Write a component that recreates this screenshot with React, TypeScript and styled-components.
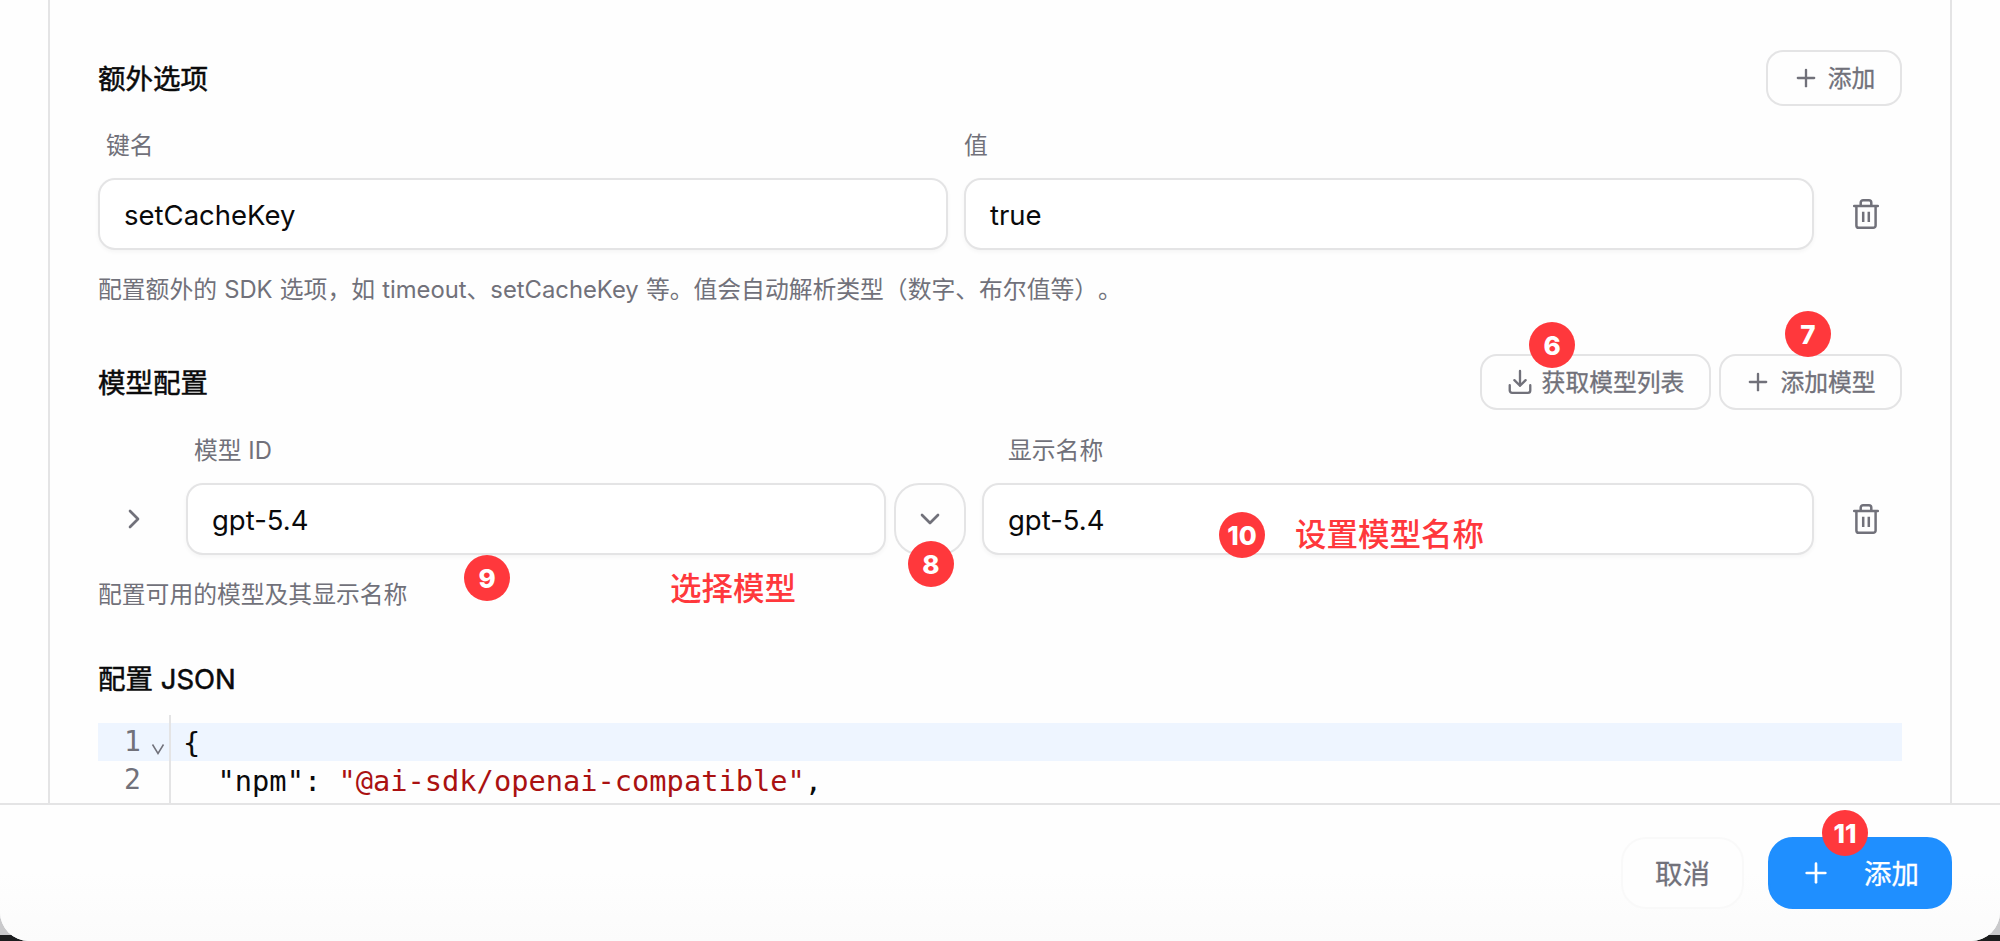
import React from "react";
import styled, { createGlobalStyle } from "styled-components";
import { Plus, ChevronRight, ChevronDown } from "lucide-react";

const SANS = `Inter, "Noto Sans CJK SC", sans-serif`;
const MONO = `"DejaVu Sans Mono", "Liberation Mono", monospace`;
const BORDER = "#e4e4e5";
const MUTED = "#71717a";
const INK = "#0a0a0b";
const RED = "#ff383c";

const GlobalStyle = createGlobalStyle`
  *, *::before, *::after { box-sizing: border-box; }
  html, body { margin: 0; padding: 0; overflow: hidden; }
  body { font-family: ${SANS}; color: ${INK}; }
  button { font-family: inherit; margin: 0; }
`;

const Backdrop = styled.div`
  position: relative;
  width: 2000px;
  height: 941px;
  overflow: hidden;
  background: linear-gradient(#c9c9cb 935px, #1c1d1e 935px);
`;

const Dialog = styled.div`
  display: flex;
  flex-direction: column;
  height: 941px;
  border-radius: 0 0 29px 29px;
  overflow: hidden;
  background: #fefefe;
`;

const Body = styled.div`
  height: 803px;
  padding: 0 48px;
  overflow: hidden;
`;

const Panel = styled.div`
  height: 100%;
  padding: 50px 48px 0;
  border-left: 2px solid ${BORDER};
  border-right: 2px solid ${BORDER};
`;

const Section = styled.section<{ $height: number }>`
  height: ${(p) => p.$height}px;
`;

const Title = styled.h3`
  margin: 0;
  font-size: 27.5px;
  font-weight: 400;
  line-height: 41px;
  white-space: nowrap;
  -webkit-text-stroke: 0.5px currentColor;
`;

const SectionHead = styled.div`
  display: flex;
  align-items: center;
  justify-content: space-between;
  height: 56px;

  ${Title} {
    padding-top: 2px;
  }
`;

const Actions = styled.div`
  display: flex;
  gap: 8px;
`;

const SmallButton = styled.button<{ $width: number }>`
  display: flex;
  align-items: center;
  justify-content: center;
  gap: 8px;
  width: ${(p) => p.$width}px;
  height: 56px;
  padding: 0 1px 0 0;
  border: 2px solid ${BORDER};
  border-radius: 17px;
  background: #fefefe;
  color: ${MUTED};
  font-size: 23.8px;
  white-space: nowrap;
`;

const ButtonText = styled.span`
  margin-top: -3px;
  -webkit-text-stroke: 0.3px currentColor;
`;

const Labels = styled.div<{ $indent: number; $top?: number }>`
  display: flex;
  align-items: center;
  height: 32px;
  margin: ${(p) => p.$top ?? 24}px 0 16px;
  padding-left: ${(p) => p.$indent}px;
`;

const Label = styled.span<{ $width?: number }>`
  width: ${(p) => (p.$width ? `${p.$width}px` : "auto")};
  color: ${MUTED};
  font-size: 23.8px;
  line-height: 32px;
`;

const FieldRow = styled.div`
  display: flex;
  align-items: center;
  height: 72px;
`;

const Input = styled.div<{ $width: number; $gap?: number }>`
  display: flex;
  align-items: center;
  width: ${(p) => p.$width}px;
  height: 72px;
  margin-right: ${(p) => p.$gap ?? 16}px;
  padding: 2px 24px 0;
  border: 2px solid ${BORDER};
  border-radius: 17px;
  background: #fff;
  box-shadow: 0 2px 4px rgba(0, 0, 0, 0.04);
  font-size: 27.5px;
`;

const IconButton = styled.button<{ $gap?: number; $outlined?: boolean }>`
  display: flex;
  align-items: center;
  justify-content: center;
  width: 72px;
  height: 72px;
  margin-right: ${(p) => p.$gap ?? 0}px;
  padding: 0;
  border: 2px solid ${(p) => (p.$outlined ? BORDER : "transparent")};
  border-radius: 25px;
  background: transparent;
  color: ${MUTED};
`;

const Hint = styled.p`
  margin: 24px 0 0;
  color: ${MUTED};
  font-size: 23.8px;
  line-height: 32px;
  word-spacing: 0.5px;
  text-spacing-trim: space-all;
  white-space: nowrap;
`;

const Editor = styled.div`
  display: flex;
  height: 88px;
  margin-top: 15px;
  background: linear-gradient(transparent 8px, #eef5ff 8px, #eef5ff 46px, transparent 46px);
  font-family: ${MONO};
  font-size: 28.7px;
`;

const Gutter = styled.div`
  width: 73px;
  padding-top: 8px;
  border-right: 2px solid ${BORDER};
  color: ${MUTED};
  font-size: 28px;
`;

const GutterRow = styled.div`
  display: flex;
  align-items: center;
  height: 38px;
  padding-left: 26px;
  line-height: 36px;
`;

const FoldMark = styled.svg`
  margin: 14px 0 0 10px;
`;

const Code = styled.div`
  padding: 9px 0 0 12px;
`;

const CodeLine = styled.div`
  height: 38px;
  line-height: 38px;
  white-space: pre;
`;

const StringToken = styled.span`
  color: #aa1111;
`;

const Footer = styled.footer`
  display: flex;
  justify-content: flex-end;
  gap: 24px;
  height: 138px;
  padding: 32px 48px 0 0;
  border-top: 2px solid ${BORDER};
  background: linear-gradient(#fefefe 50%, #fbfbfb);
`;

const FooterButton = styled.button<{ $primary?: boolean }>`
  display: flex;
  align-items: center;
  justify-content: center;
  gap: 32px;
  width: ${(p) => (p.$primary ? 184 : 123)}px;
  height: 72px;
  padding: ${(p) => (p.$primary ? "0 1px 0 0" : "0")};
  border: 2px solid ${(p) => (p.$primary ? "#1f8fff" : "#f9f9f9")};
  border-radius: 25px;
  background: ${(p) => (p.$primary ? "#1f8fff" : "#fefefe")};
  color: ${(p) => (p.$primary ? "#fff" : MUTED)};
  font-size: 27.5px;
  white-space: nowrap;
`;

const Badge = styled.span<{ $x: number; $y: number }>`
  position: absolute;
  left: ${(p) => p.$x - 23}px;
  top: ${(p) => p.$y - 23}px;
  width: 46px;
  height: 46px;
  border-radius: 50%;
  background: ${RED};
  color: #fff;
  font-size: 26px;
  font-weight: 800;
  line-height: 47px;
  text-align: center;
`;

const Note = styled.span<{ $x: number; $y: number }>`
  position: absolute;
  left: ${(p) => p.$x}px;
  top: ${(p) => p.$y - 20}px;
  color: ${RED};
  font-size: 31.5px;
  font-weight: 500;
  line-height: 40px;
  white-space: nowrap;
`;

const TrashIcon = () => (
  <svg width="32" height="32" viewBox="0 0 32 32" fill="none" stroke="currentColor" strokeWidth="2.5" strokeLinecap="round" strokeLinejoin="round">
    <path d="M4.2 8H27.8M6.4 8V27.4a2.4 2.4 0 0 0 2.4 2.4H23.2a2.4 2.4 0 0 0 2.4-2.4V8M10.7 8V4.7a2.4 2.4 0 0 1 2.4-2.4h5.8A2.4 2.4 0 0 1 21.3 4.7V8" />
    <path d="M13.2 13.8V24M18.8 13.8V24" strokeLinecap="butt" />
  </svg>
);

const DownloadIcon = () => (
  <svg width="28" height="28" viewBox="0 0 24 24" fill="none" stroke="currentColor" strokeWidth="2" strokeLinecap="round" strokeLinejoin="round">
    <path d="M12 2.6v12.6M7.2 10.4l4.8 4.8 4.8-4.8M3.2 14.8v4.5a2 2 0 0 0 2 2h13.6a2 2 0 0 0 2-2v-4.5" />
  </svg>
);

const badges = [
  { n: 6, x: 1552, y: 345 },
  { n: 7, x: 1808, y: 334 },
  { n: 8, x: 931, y: 564 },
  { n: 9, x: 487, y: 578 },
  { n: 10, x: 1242, y: 535 },
  { n: 11, x: 1845, y: 833 },
];

export default function App() {
  return (
    <Backdrop>
      <GlobalStyle />
      <Dialog>
        <Body>
          <Panel>
            <Section $height={304}>
              <SectionHead>
                <Title>额外选项</Title>
                <SmallButton $width={136}>
                  <Plus size={28} />
                  <ButtonText>添加</ButtonText>
                </SmallButton>
              </SectionHead>
              <Labels $indent={8}>
                <Label $width={858}>键名</Label>
                <Label>值</Label>
              </Labels>
              <FieldRow>
                <Input $width={850}>setCacheKey</Input>
                <Input $width={850}>true</Input>
                <IconButton>
                  <TrashIcon />
                </IconButton>
              </FieldRow>
              <Hint>配置额外的 SDK 选项，如 timeout、setCacheKey 等。值会自动解析类型（数字、布尔值等）。</Hint>
            </Section>
            <Section $height={305}>
              <SectionHead>
                <Title>模型配置</Title>
                <Actions>
                  <SmallButton $width={231}>
                    <DownloadIcon />
                    <ButtonText>获取模型列表</ButtonText>
                  </SmallButton>
                  <SmallButton $width={183}>
                    <Plus size={28} />
                    <ButtonText>添加模型</ButtonText>
                  </SmallButton>
                </Actions>
              </SectionHead>
              <Labels $indent={96} $top={25}>
                <Label $width={814}>模型 ID</Label>
                <Label>显示名称</Label>
              </Labels>
              <FieldRow>
                <IconButton $gap={16}>
                  <ChevronRight size={32} />
                </IconButton>
                <Input $width={700} $gap={8}>gpt-5.4</Input>
                <IconButton $gap={16} $outlined>
                  <ChevronDown size={32} />
                </IconButton>
                <Input $width={832}>gpt-5.4</Input>
                <IconButton>
                  <TrashIcon />
                </IconButton>
              </FieldRow>
              <Hint>配置可用的模型及其显示名称</Hint>
            </Section>
            <Title>配置 JSON</Title>
            <Editor>
              <Gutter>
                <GutterRow>
                  1
                  <FoldMark width="14" height="12" viewBox="0 0 14 12" fill="none" stroke="currentColor" strokeWidth="1.5">
                    <path d="M1.5 1.5L7 10.5L12.5 1.5" />
                  </FoldMark>
                </GutterRow>
                <GutterRow>2</GutterRow>
              </Gutter>
              <Code>
                <CodeLine>{"{"}</CodeLine>
                <CodeLine>
                  {'  "npm": '}
                  <StringToken>"@ai-sdk/openai-compatible"</StringToken>,
                </CodeLine>
              </Code>
            </Editor>
          </Panel>
        </Body>
        <Footer>
          <FooterButton>
            <ButtonText>取消</ButtonText>
          </FooterButton>
          <FooterButton $primary>
            <Plus size={32} />
            <ButtonText>添加</ButtonText>
          </FooterButton>
        </Footer>
      </Dialog>
      <Note $x={670} $y={589}>选择模型</Note>
      <Note $x={1295} $y={535}>设置模型名称</Note>
      {badges.map((b) => (
        <Badge key={b.n} $x={b.x} $y={b.y}>{b.n}</Badge>
      ))}
    </Backdrop>
  );
}
